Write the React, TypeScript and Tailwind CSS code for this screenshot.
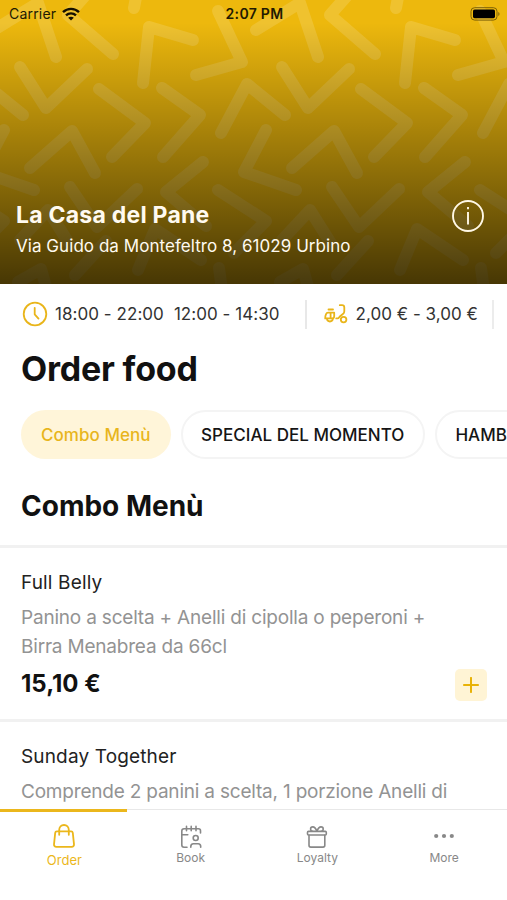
import React, { useState } from 'react';

const hours = ['18:00 - 22:00', '12:00 - 14:30'];

const categories = ['Combo Menù', 'SPECIAL DEL MOMENTO', 'HAMBURGER'];

const products = [
  {
    id: 'p1',
    title: 'Full Belly',
    description: 'Panino a scelta + Anelli di cipolla o peperoni + Birra Menabrea da 66cl',
    price: '15,10 €',
  },
  {
    id: 'p2',
    title: 'Sunday Together',
    description: 'Comprende 2 panini a scelta, 1 porzione Anelli di',
    price: null,
  },
];

const chevrons = [
  'M137 -8L134 8',
  'M-6 30L38 3L56 57',
  'M90 -10L68 15L113 54',
  'M143 83L149 27L193 40',
  'M218 11L242 62L196 75',
  'M20 67L46 108L87 69',
  'M99 89L145 123L112 157',
  'M162 88L200 115L163 157',
  'M221 133L247 84L285 115',
  'M30 168L72 131L95 173',
  'M4 130L-18 172L34 190',
  'M70 187L97 227L137 189',
  'M203 162L166 192L206 226',
  'M218 190L266 221L234 253',
  'M20 240L48 210L70 245',
  'M138 270L155 229L201 260',
  'M75 275L106 241',
  'M18 282L41 269L47 290',
  'M219 268L222 290',
];

const HeroPattern = () => (
  <svg className="absolute inset-0 w-full h-full" viewBox="0 0 507 284" fill="none">
    {[-262, 0, 262].map((x) => (
      <g key={x} transform={`translate(${x} 0)`}>
        {chevrons.map((d) => (
          <path
            key={d}
            d={d}
            stroke="#fff"
            strokeOpacity={0.14}
            strokeWidth={12}
            strokeLinecap="round"
            strokeLinejoin="round"
          />
        ))}
      </g>
    ))}
  </svg>
);

const StatusBar = () => (
  <div className="relative h-[27px] grid grid-cols-3 items-center pl-[9px] pr-[7px] text-[14px] text-[#221a02]">
    <div className="flex items-center gap-[6px]">
      <span className="tracking-[0.2px]">Carrier</span>
      <svg className="w-[18px] h-[14px]" viewBox="0 0 18 14" fill="none" stroke="#151000" strokeWidth={2.4}>
        <path d="M1 5.2C5.5 .8 12.5 .8 17 5.2" />
        <path d="M4 8.4C6.8 5.7 11.2 5.7 14 8.4" />
        <path d="M9 13.6L6.2 10.8C7.8 9.4 10.2 9.4 11.8 10.8Z" fill="#151000" stroke="none" />
      </svg>
    </div>
    <span className="text-center font-semibold tracking-[0.3px]">2:07 PM</span>
    <svg className="justify-self-end w-[30px] h-[14px]" viewBox="0 0 30 14" fill="none">
      <rect x="1" y=".7" width="26" height="12.4" rx="3.6" stroke="#7c6108" strokeWidth="1" />
      <rect x="3" y="2.6" width="22" height="8.6" rx="1.6" fill="#000" />
      <path d="M28.3 5v4c1.6-.8 1.6-3.200 0-4z" fill="#7c6108" />
    </svg>
  </div>
);

const ScooterIcon = () => (
  <svg className="w-6 h-5" viewBox="0 0 24 20" fill="none" stroke="#e9b51a" strokeWidth={1.8} strokeLinecap="round" strokeLinejoin="round">
    <path d="M4.500 5.500h4.500" />
    <path d="M4 8.700h6.200v3.500c0 1.300-.8 2.200-2 2.200H1.200c0-3.200 1-5.700 2.800-5.700zM6.600 8.900v5.300" />
    <path d="M3 14.600a2.900 2.900 0 0 0 5.800 0" />
    <path d="M15.800 1.200h2.200c1.500 0 2.300.9 2.300 2.200v3.800c0 1.200-.4 2-1.400 2.800l-2.800 2.200c-1 .9-1.200 2.200-2.500 2.200h-1.400" />
    <circle cx="19.600" cy="15.600" r="2.800" />
  </svg>
);

const PlusIcon = () => (
  <svg className="w-4 h-4" viewBox="0 0 16 16" stroke="#e8b208" strokeWidth={2} strokeLinecap="round">
    <path d="M8 .9v14.200M.9 8h14.200" />
  </svg>
);

const BagIcon = () => (
  <svg className="w-[22px] h-6" viewBox="0 0 22 24" fill="none" stroke="currentColor" strokeWidth={1.8} strokeLinecap="round" strokeLinejoin="round">
    <path d="M3.800 7.400h14.400c1 0 1.500.5 1.600 1.400l1.200 11.500c.1 1.600-.8 2.500-2.300 2.500H3.300C1.800 22.800.9 21.900 1 20.300L2.200 8.800c.1-.9.6-1.400 1.600-1.400z" />
    <path d="M6.200 10.800V6c0-2.900 2-5 4.800-5s4.800 2.100 4.800 5v4.800" />
  </svg>
);

const BookIcon = () => (
  <svg className="w-[22px] h-6" viewBox="0 0 22 24" fill="none" stroke="currentColor" strokeWidth={1.6} strokeLinecap="round" strokeLinejoin="round">
    <path d="M7 22.200H4c-1.500 0-2.200-.8-2.200-2.200V6c0-1.500.8-2.300 2.200-2.300h14.500c1.300 0 2 .7 2 2V8" />
    <path d="M6.500 1.400v4.400M11.200 1.400v4.400M16 1.400v4.400M1.800 9.800h6" />
    <circle cx="15.700" cy="13" r="2.500" />
    <path d="M10.800 22.200v-.8c0-1.700 1-2.700 2.600-2.700h4.700c1.600 0 2.600 1 2.600 2.700v.8" />
  </svg>
);

const GiftIcon = () => (
  <svg className="w-[22px] h-6" viewBox="0 0 22 24" fill="none" stroke="currentColor" strokeWidth={1.6} strokeLinecap="round" strokeLinejoin="round">
    <rect x="1.500" y="6.400" width="18.800" height="3.600" rx="1" />
    <path d="M3 10.200v10c0 1.200.6 1.900 1.800 1.900H17c1.200 0 1.800-.7 1.800-1.900v-10" />
    <path d="M10.900 6.200C9.900 3.600 8.700 1.900 6.800 1.900c-1.300 0-2.200.8-2.200 2 0 1.300.8 2.300 2 2.300M10.900 6.200c1-2.600 2.200-4.300 4.100-4.300 1.300 0 2.200.8 2.200 2 0 1.300-.8 2.300-2 2.300" />
  </svg>
);

const MoreIcon = () => (
  <svg className="w-[22px] h-6" viewBox="0 0 22 24" fill="currentColor">
    <circle cx="3.200" cy="11" r="2.100" />
    <circle cx="11" cy="11" r="2.100" />
    <circle cx="18.800" cy="11" r="2.100" />
  </svg>
);

const tabs = [
  { id: 'order', label: 'Order', icon: BagIcon },
  { id: 'book', label: 'Book', icon: BookIcon },
  { id: 'loyalty', label: 'Loyalty', icon: GiftIcon },
  { id: 'more', label: 'More', icon: MoreIcon },
];

const App: React.FC = () => {
  const [category, setCategory] = useState(categories[0]);
  const [activeTab, setActiveTab] = useState('order');

  return (
    <div className="w-full h-[900px] flex flex-col overflow-hidden bg-white font-['Inter',sans-serif] text-[#111]">
      <header className="relative h-[284px] shrink-0 flex flex-col overflow-hidden bg-[#edb80d]">
        <HeroPattern />
        <div className="absolute inset-0 bg-linear-to-b from-black/0 from-8% to-black/70" />
        <StatusBar />
        <div className="relative mt-auto flex items-start justify-between pl-4 pr-[23px] pb-[24px] text-[#fffaf0]">
          <div>
            <h1 className="text-[23px] leading-8 font-bold tracking-[0.24px]">La Casa del Pane</h1>
            <p className="mt-[1px] text-[17px] leading-[28px] tracking-[0.05px]">Via Guido da Montefeltro 8, 61029 Urbino</p>
          </div>
          <button className="w-8 h-8 mt-[1px]">
            <svg viewBox="0 0 32 32" fill="none" stroke="#fff8e6" strokeWidth={1.9}>
              <circle cx="16" cy="16" r="15" />
              <path d="M16 12v12.500" />
              <path d="M16 7v2.200" />
            </svg>
          </button>
        </div>
      </header>

      <main className="flex-1 min-h-0 overflow-hidden">
        <div className="h-[60px] flex items-center text-[17px] text-[#333]">
          <svg className="w-[26px] h-[26px] ml-[22px] mr-[7px]" viewBox="0 0 26 26" fill="none" stroke="#e9b51a" strokeWidth={1.8} strokeLinecap="round" strokeLinejoin="round">
            <circle cx="13" cy="13" r="11.300" />
            <path d="M12.700 6.800v6.500l3.800 4.300" />
          </svg>
          <div className="flex gap-[10px] pt-[1px] tracking-[0.05px]">
            {hours.map((slot) => (
              <span key={slot}>{slot}</span>
            ))}
          </div>
          <span className="w-[2px] h-[29px] ml-[25px] mr-[17px] bg-[#e8e8e8]" />
          <ScooterIcon />
          <span className="ml-[8px] pt-[1px] tracking-[0.02px]">2,00 € - 3,00 €</span>
          <span className="w-[2px] h-[29px] ml-[14px] bg-[#ececec]" />
        </div>

        <h2 className="h-[49px] pl-[21px] text-[34px] leading-[50px] font-bold tracking-[-0.2px]">Order food</h2>

        <div className="mt-[17px] pl-[21px] flex gap-[10px] overflow-hidden">
          {categories.map((item) => (
            <button
              key={item}
              onClick={() => setCategory(item)}
              className={
                item === category
                  ? 'h-[49px] px-5 pt-[2px] shrink-0 rounded-full bg-[#fff5d9] text-[17px] font-medium tracking-[0.05px] text-[#e8b51c]'
                  : 'h-[49px] pl-[18.500px] pr-[18.500px] pt-[2px] shrink-0 rounded-full border-2 border-[#f4f4f4] text-[17px] font-medium tracking-[0.02px] text-[#151515]'
              }
            >
              {item}
            </button>
          ))}
        </div>

        <h3 className="mt-[29px] h-[57px] pl-[21px] text-[28px] leading-[37px] font-bold">Combo Menù</h3>

        {products.map((product) => (
          <article key={product.id} className="h-[173.500px] border-t-[3px] border-[#f1f1f1] pt-[19px] pl-[21px] pr-5">
            <h4 className="text-[19px] leading-[32px] tracking-[0.15px] text-[#222]">{product.title}</h4>
            <p className="mt-[4px] w-[440px] text-[19px] leading-[29px] tracking-[-0.2px] text-[#939393]">{product.description}</p>
            {product.price && (
              <div className="flex items-center justify-between mt-[5px]">
                <span className="text-[24px] leading-[32px] font-bold">{product.price}</span>
                <button className="w-8 h-8 mt-[3px] flex items-center justify-center rounded-[5px] bg-[#fff4d5]">
                  <PlusIcon />
                </button>
              </div>
            )}
          </article>
        ))}
      </main>

      <nav className="h-[91px] shrink-0 grid grid-cols-4 bg-white">
        {tabs.map(({ id, label, icon: Icon }) => (
          <button
            key={id}
            onClick={() => setActiveTab(id)}
            className={
              id === activeTab
                ? 'flex flex-col items-center border-t-[3px] border-[#ebb71c] pl-[2px] pt-[12px] text-[13px] tracking-[0.05px] text-[#ebb71c]'
                : 'flex flex-col items-center border-t border-[#e8e8e8] pl-[1px] pt-[15px] text-[12px] text-[#888]'
            }
          >
            <Icon />
            <span className={id === activeTab ? 'mt-[2px] leading-5' : 'leading-[18px]'}>{label}</span>
          </button>
        ))}
      </nav>
    </div>
  );
};

export default App;
